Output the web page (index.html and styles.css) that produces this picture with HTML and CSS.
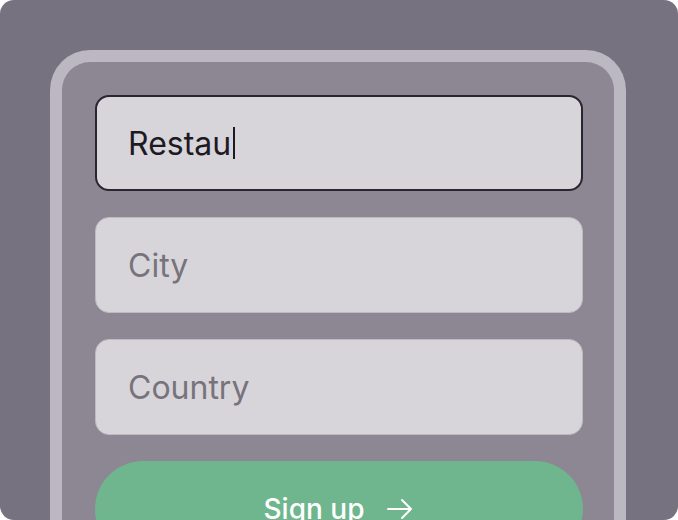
FILE: index.html
```html
<!DOCTYPE html>
<html>
<head>
<meta charset="utf-8">
<link rel="stylesheet" href="styles.css">
</head>
<body>
<div class="screen">
  <div class="card">
    <div class="field field-active"><span class="value">Restau</span><span class="caret"></span></div>
    <div class="field"><span class="placeholder">City</span></div>
    <div class="field"><span class="placeholder">Country</span></div>
    <div class="btn">
      <span>Sign up</span>
      <svg class="arrow" width="28" height="22" viewBox="0 0 28 22"><path d="M2 11H25M16 2L25 11L16 20" fill="none" stroke="#fff" stroke-width="2" stroke-linecap="round" stroke-linejoin="round"/></svg>
    </div>
  </div>
</div>
</body>
</html>
```
FILE: styles.css
```css
html, body {
  margin: 0;
  padding: 0;
  background: #ffffff;
}
body {
  width: 678px;
  height: 520px;
  overflow: hidden;
  font-family: "Inter", "Noto Sans", sans-serif;
}
.screen {
  width: 678px;
  height: 520px;
  box-sizing: border-box;
  background: #77727f;
  border-radius: 14px;
  padding: 50px 52px 0 50px;
  overflow: hidden;
}
.card {
  background: #8d8794;
  border: 12px solid #bcb8c1;
  border-bottom: none;
  border-radius: 40px 40px 0 0;
  padding: 33px 31px 40px 33px;
  display: flex;
  flex-direction: column;
  gap: 26px;
}
.field {
  height: 96px;
  box-sizing: border-box;
  background: #d7d5da;
  border: 1px solid #bdbac2;
  border-radius: 14px;
  display: flex;
  align-items: center;
  padding-left: 32px;
  font-size: 32px;
}
.field-active {
  border: 2px solid #2a2530;
  padding-left: 31px;
}
.value {
  color: #1e1a23;
}
.caret {
  display: inline-block;
  width: 2px;
  height: 32px;
  background: #1e1a23;
  margin-left: 2px;
}
.placeholder {
  color: #77737c;
}
.btn {
  height: 96px;
  border-radius: 48px;
  background: #6fb68e;
  color: #ffffff;
  font-size: 28px;
  font-weight: 500;
  display: flex;
  align-items: center;
  justify-content: center;
  gap: 22px;
}
.arrow {
  display: block;
}
```
